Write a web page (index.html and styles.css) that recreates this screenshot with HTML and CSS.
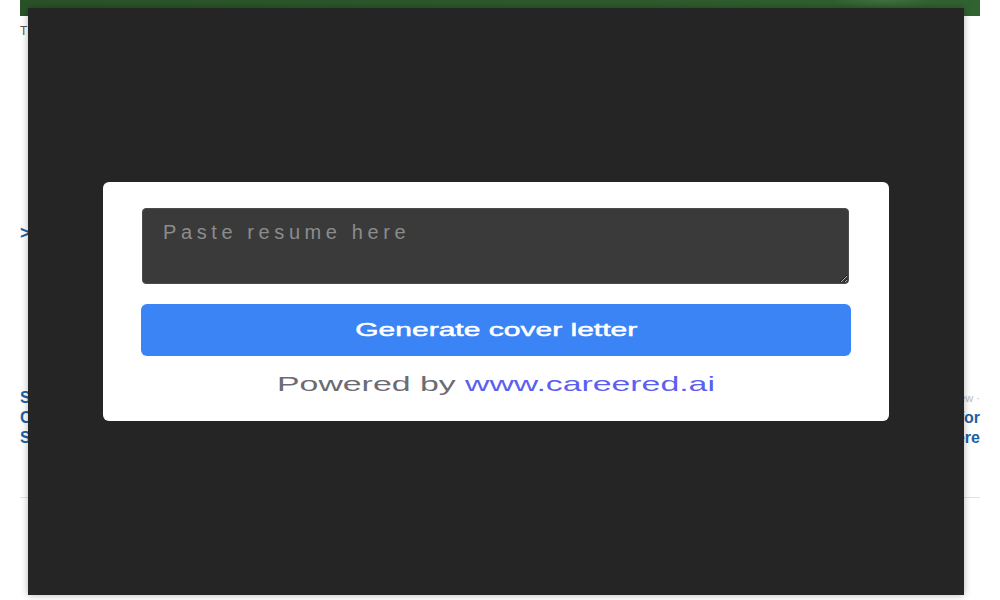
FILE: index.html
```html
<!DOCTYPE html>
<html lang="en">
<head>
<meta charset="utf-8">
<title>Cover letter generator</title>
<link rel="stylesheet" href="styles.css">
</head>
<body>
<div class="site">
  <div class="topbar"></div>
  <main class="content">
    <div class="crumb">T</div>
    <div class="arrow">&gt;</div>
    <div class="listings">
      <div class="col col-left">
        <div class="line">Senior Engineer</div>
        <div class="line">Customer Success</div>
        <div class="line">Sales Lead</div>
      </div>
      <div class="col col-right">
        <div class="line small">new ·</div>
        <div class="line">Product Designer for</div>
        <div class="line">Join our team here</div>
      </div>
    </div>
    <hr class="rule">
  </main>
</div>

<div class="overlay">
  <div class="card">
    <textarea class="resume" placeholder="Paste resume here"></textarea>
    <button class="generate" type="button"><span class="wide-btn">Generate cover letter</span></button>
    <div class="powered"><span class="wide-txt">Powered by <a class="link" href="#">www.careered.ai</a></span></div>
  </div>
</div>
</body>
</html>
```

FILE: styles.css
```css
body {
  margin: 0;
  background: #ffffff;
  font-family: "Liberation Sans", Arial, sans-serif;
}

.site {
  margin: 0 20px;
}

.topbar {
  height: 16px;
  background:
    radial-gradient(ellipse 70px 12px at 90% 0%, rgba(110, 160, 110, 0.25), transparent 75%),
    linear-gradient(90deg, #2a5228 0%, #2d5a2c 60%, #316232 100%);
}

.content {
  padding-top: 8px;
}

.crumb {
  font-size: 12px;
  line-height: 14px;
  color: #555;
}

.arrow {
  margin-top: 185px;
  font-size: 18px;
  line-height: 20px;
  font-weight: bold;
  color: #1d5fa6;
}

.listings {
  margin-top: 145px;
  display: flex;
  justify-content: space-between;
}

.col {
  font-size: 16px;
  line-height: 20px;
  font-weight: bold;
  color: #1d5fa6;
}

.col-right {
  text-align: right;
}

.small {
  font-size: 11px;
  font-weight: normal;
  color: #bbb;
}

.rule {
  margin: 49px 0 0;
  border: 0;
  border-top: 1px solid #e2e2e2;
}

.overlay {
  position: fixed;
  left: 28px;
  top: 8px;
  width: 936px;
  height: 587px;
  background: #252525;
  box-shadow: 0 0 7px rgba(0, 0, 0, 0.3);
  display: flex;
  align-items: center;
  justify-content: center;
}

.card {
  width: 786px;
  box-sizing: border-box;
  padding: 26px 38px 25px;
  background: #ffffff;
  border-radius: 6px;
  display: flex;
  flex-direction: column;
}

.resume {
  display: block;
  box-sizing: border-box;
  width: calc(100% - 3px);
  margin: 0 0 0 1px;
  height: 76px;
  padding: 11px 20px;
  background: #3a3a3a;
  border: 1px solid #4b4b4b;
  border-radius: 4px;
  font-family: "Liberation Sans", Arial, sans-serif;
  font-size: 20px;
  line-height: 24px;
  color: #e0e0e0;
  outline: none;
}

.resume::placeholder {
  color: #8c8c8c;
  letter-spacing: 4.6px;
}

.generate {
  margin-top: 20px;
  height: 52px;
  padding: 0;
  border: 0;
  border-radius: 6px;
  background: #3a84f5;
  color: #ffffff;
  font-family: "Liberation Sans", Arial, sans-serif;
  font-size: 19px;
  font-weight: normal;
  -webkit-text-stroke: 0.5px #ffffff;
  cursor: pointer;
}

.wide-btn {
  display: inline-block;
  transform: scaleX(1.58);
}

.powered {
  margin-top: 16px;
  font-size: 21px;
  line-height: 24px;
  text-align: center;
  color: #6b6b73;
}

.wide-txt {
  display: inline-block;
  transform: scaleX(1.61);
}

.link {
  color: #5b60f0;
  text-decoration: none;
}
```
